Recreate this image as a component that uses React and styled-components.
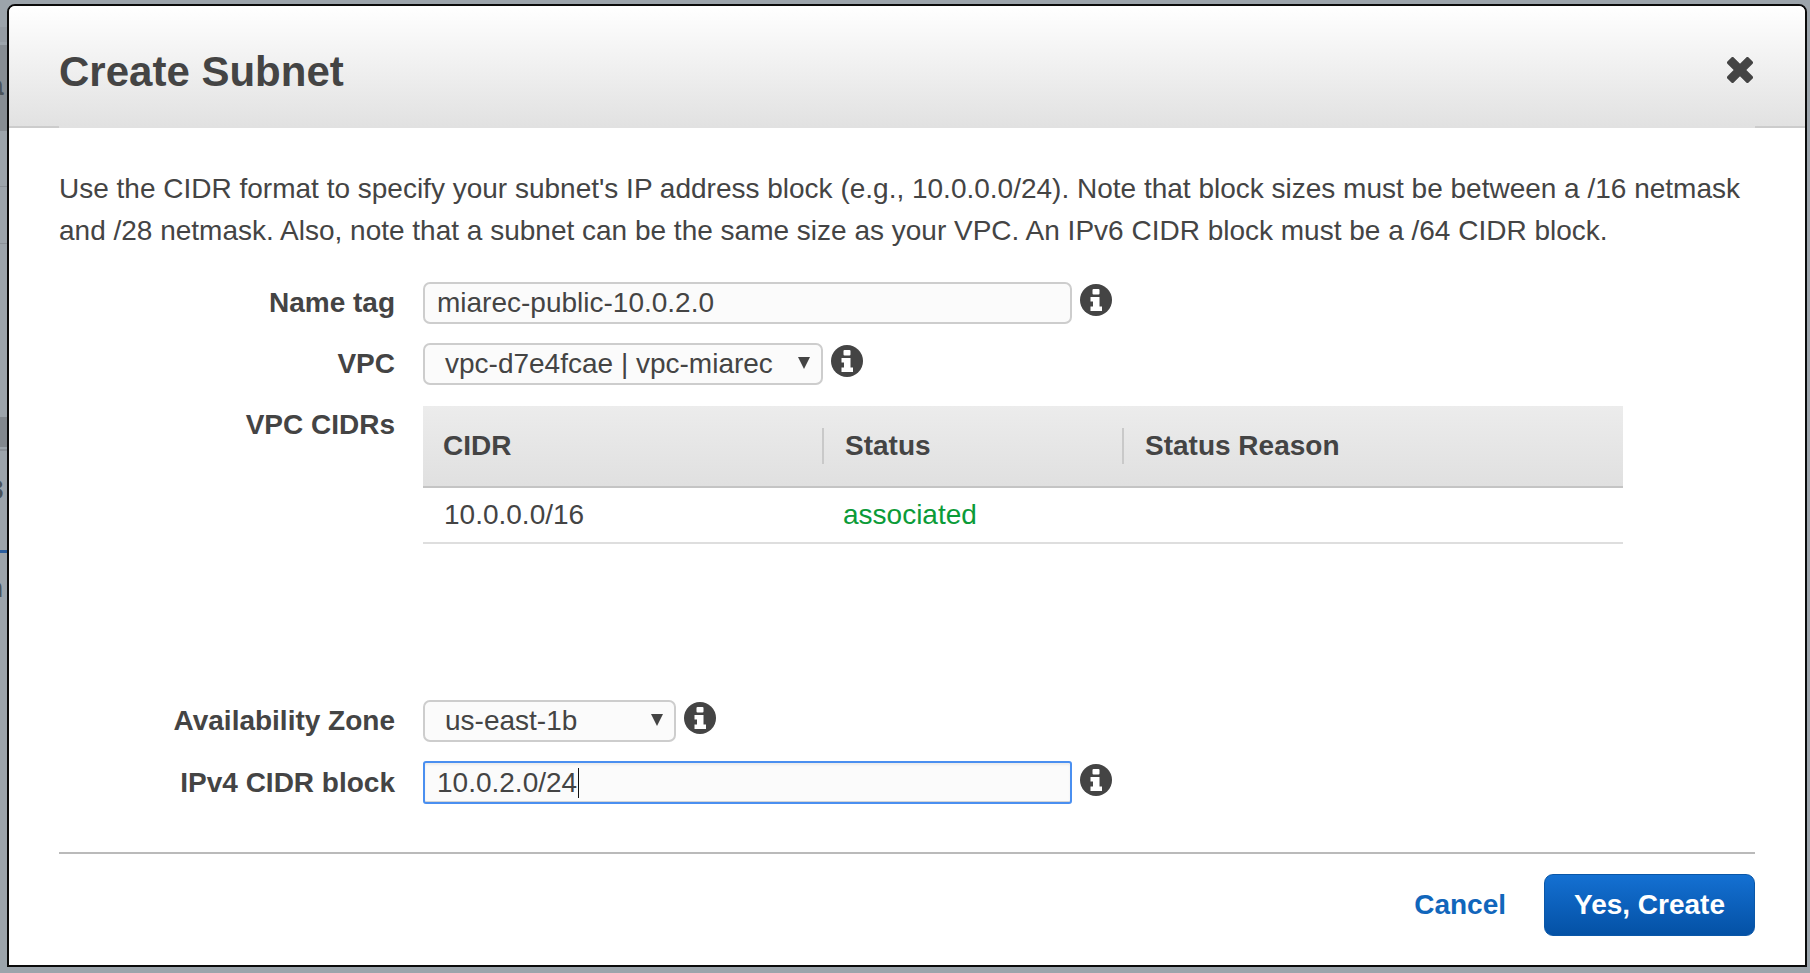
import React from 'react';
import styled, {createGlobalStyle} from 'styled-components';

const GlobalStyle = createGlobalStyle`
  html, body {
    margin: 0;
    padding: 0;
    height: 100%;
    overflow: hidden;
    background: #9ca4ab;
  }
  * {
    box-sizing: border-box;
  }
`;

const Backdrop = styled.div`
  position: relative;
  height: 973px;
  padding: 4px 3px 6px 7px;
  background: #9ca4ab;
  font-family: "Liberation Sans", Arial, sans-serif;
  overflow: hidden;
`;
// the dimmed page that peeks out round the dialog
const PeekText = styled.span`
  position: absolute;
  left: ${(props) => props.$left}px;
  top: ${(props) => props.$top}px;
  font-size: 28px;
  font-weight: ${(props) => (props.$bold ? 700 : 400)};
  color: #4b5259;
  white-space: nowrap;
`;
const SideBand = styled.div`
  position: absolute;
  left: 0;
  width: 8px;
  top: ${(props) => props.$top}px;
  height: ${(props) => props.$height}px;
  background: ${(props) => props.$color};
`;
const Dialog = styled.div`
  position: relative;
  height: 963px;
  display: flex;
  flex-direction: column;
  background: #fff;
  border: 2px solid #0b0b0b;
  border-radius: 8px 8px 0 0;
  overflow: hidden;
`;
const Header = styled.header`
  flex: none;
  height: 122px;
  display: flex;
  align-items: center;
  justify-content: space-between;
  padding: 0 50px;
  background:
    linear-gradient(#e1e1e1, #e1e1e1) center bottom / calc(100% - 100px) 2px no-repeat,
    linear-gradient(#cccccc, #cccccc) center bottom / 100% 2px no-repeat,
    linear-gradient(#fff, #e1e1e1);
`;
const Title = styled.h1`
  margin: 10px 0 0 0;
  font-size: 42px;
  font-weight: 700;
  color: #444;
`;
const CloseSvg = styled.svg`
  width: 26px;
  height: 26px;
  margin: 6px 2px 0 0;
  fill: #444;
`;
const Body = styled.div`
  flex: 1;
  padding: 0 50px;
  color: #444;
`;
const Intro = styled.p`
  margin: 40px 0 30px 0;
  font-size: 28px;
  line-height: 42px;
`;
const FormRow = styled.div`
  display: flex;
  align-items: center;
  height: ${(props) => props.$height}px;
  margin-bottom: ${(props) => props.$gap}px;
`;
const Label = styled.label`
  flex: none;
  width: 336px;
  margin-right: 28px;
  text-align: right;
  font-size: 28px;
  font-weight: 700;
  color: #444;
`;
const TextInput = styled.div`
  width: 649px;
  height: ${(props) => (props.$focused ? 43 : 42)}px;
  display: flex;
  align-items: center;
  padding-left: 12px;
  font-size: 28px;
  background: #fbfbfb;
  border-radius: ${(props) => (props.$focused ? 3 : 7)}px;
  border: 2px solid ${(props) => (props.$focused ? '#4a8ff0' : '#cdcdcd')};
  box-shadow: ${(props) => (props.$focused ? 'inset 0 2px 2px #ececec, inset 0 -1px 0 #d4d4d4' : 'none')};
`;
const Caret = styled.span`
  width: 1px;
  height: 30px;
  background: #111;
  margin-left: 1px;
`;
const Select = styled.div`
  width: ${(props) => props.$width}px;
  height: 42px;
  display: flex;
  align-items: center;
  justify-content: space-between;
  padding: 0 11px 0 20px;
  font-size: 28px;
  background: #fbfbfb;
  border-radius: 7px;
  border: 2px solid #cdcdcd;
`;
const Arrow = styled.span`
  width: 0;
  height: 0;
  margin-bottom: 3px;
  border-left: 6px solid transparent;
  border-right: 6px solid transparent;
  border-top: 12px solid #444;
`;
const InfoSvg = styled.svg`
  flex: none;
  width: 32px;
  height: 32px;
  margin: 0 0 6px 8px;
`;
const TableRow = styled.div`
  display: flex;
  align-items: flex-start;
  height: 294px;
`;
const TableLabel = styled(Label)`
  padding-top: 3px;
`;
const Table = styled.div`
  width: 1200px;
`;
const TableHead = styled.div`
  height: 82px;
  display: grid;
  grid-template-columns: 399px 300px 1fr;
  align-items: center;
  background: linear-gradient(#ececec, #e0e0e0);
  border-bottom: 2px solid #c4c4c4;
`;
const HeadCell = styled.div`
  height: 36px;
  line-height: 36px;
  padding-left: ${(props) => props.$pad}px;
  font-size: 28px;
  font-weight: 700;
  color: #444;
  border-left: ${(props) => (props.$divider ? '2px solid #c9c9c9' : 'none')};
`;
const TableBody = styled.div`
  height: 56px;
  display: grid;
  grid-template-columns: 400px 300px 1fr;
  align-items: center;
  border-bottom: 2px solid #dedede;
  font-size: 28px;
`;
const Cell = styled.div`
  padding-left: ${(props) => props.$pad}px;
  color: ${(props) => props.$color || '#444'};
`;
const Divider = styled.hr`
  margin: 0;
  border: none;
  height: 2px;
  background: #bababa;
`;
const Footer = styled.div`
  display: flex;
  align-items: center;
  justify-content: flex-end;
  gap: 38px;
  margin-top: 20px;
`;
const CancelLink = styled.a`
  font-size: 28px;
  font-weight: 700;
  color: #1166bb;
`;
const PrimaryButton = styled.button`
  width: 211px;
  height: 62px;
  font-family: inherit;
  font-size: 28px;
  font-weight: 700;
  color: #fff;
  background: linear-gradient(#1470d2, #0451a5);
  border: 1px solid #0a57a8;
  border-radius: 9px;
`;

const CloseIcon = () => (
  <CloseSvg viewBox="0 0 26 26">
    <rect x="-2" y="8.5" width="30" height="9" rx="2" transform="rotate(45 13 13)" />
    <rect x="-2" y="8.5" width="30" height="9" rx="2" transform="rotate(-45 13 13)" />
  </CloseSvg>
);

const InfoIcon = () => (
  <InfoSvg viewBox="0 0 32 32">
    <circle cx="16" cy="16" r="16" fill="#444" />
    <rect x="12.5" y="5" width="7" height="5.5" rx="1" fill="#fff" />
    <path d="M10.5 13h9v9.5h2.5v4.5H10.5v-4.5h2.5v-5h-2.5z" fill="#fff" />
  </InfoSvg>
);

const App = () => {
  return (
    <Backdrop>
      <GlobalStyle />
      <SideBand $top={27} $height={15} $color="#959ca3" />
      <SideBand $top={45} $height={86} $color="#878d93" />
      <SideBand $top={186} $height={1} $color="#8b9198" />
      <SideBand $top={243} $height={1} $color="#8b9198" />
      <SideBand $top={417} $height={30} $color="#82888e" />
      <SideBand $top={449} $height={2} $color="#8b9198" />
      <SideBand $top={550} $height={3} $color="#2b5e9e" />
      <PeekText $left={-9} $top={-27}>and subnets and their other</PeekText>
      <PeekText $left={1445} $top={-27} $bold>1 to 7 of 7 Subnets</PeekText>
      <PeekText $left={-12} $top={70} $bold>a</PeekText>
      <PeekText $left={-12} $top={474} $bold>3</PeekText>
      <PeekText $left={-14} $top={572} $bold>n</PeekText>
      <Dialog>
        <Header>
          <Title>Create Subnet</Title>
          <CloseIcon />
        </Header>
        <Body>
          <Intro>
            Use the CIDR format to specify your subnet's IP address block (e.g., 10.0.0.0/24). Note that block sizes must be between a /16 netmask and /28 netmask. Also, note that a subnet can be the same size as your VPC. An IPv6 CIDR block must be a /64 CIDR block.
          </Intro>
          <FormRow $height={42} $gap={19}>
            <Label>Name tag</Label>
            <TextInput>miarec-public-10.0.2.0</TextInput>
            <InfoIcon />
          </FormRow>
          <FormRow $height={42} $gap={21}>
            <Label>VPC</Label>
            <Select $width={400}>
              vpc-d7e4fcae | vpc-miarec
              <Arrow />
            </Select>
            <InfoIcon />
          </FormRow>
          <TableRow>
            <TableLabel>VPC CIDRs</TableLabel>
            <Table>
              <TableHead>
                <HeadCell $pad={20}>CIDR</HeadCell>
                <HeadCell $pad={21} $divider>Status</HeadCell>
                <HeadCell $pad={21} $divider>Status Reason</HeadCell>
              </TableHead>
              <TableBody>
                <Cell $pad={21}>10.0.0.0/16</Cell>
                <Cell $pad={20} $color="#0b9b38">associated</Cell>
                <Cell />
              </TableBody>
            </Table>
          </TableRow>
          <FormRow $height={42} $gap={19}>
            <Label>Availability Zone</Label>
            <Select $width={253}>
              us-east-1b
              <Arrow />
            </Select>
            <InfoIcon />
          </FormRow>
          <FormRow $height={43} $gap={48}>
            <Label>IPv4 CIDR block</Label>
            <TextInput $focused>
              10.0.2.0/24
              <Caret />
            </TextInput>
            <InfoIcon />
          </FormRow>
          <Divider />
          <Footer>
            <CancelLink>Cancel</CancelLink>
            <PrimaryButton>Yes, Create</PrimaryButton>
          </Footer>
        </Body>
      </Dialog>
    </Backdrop>
  );
};

export default App;
